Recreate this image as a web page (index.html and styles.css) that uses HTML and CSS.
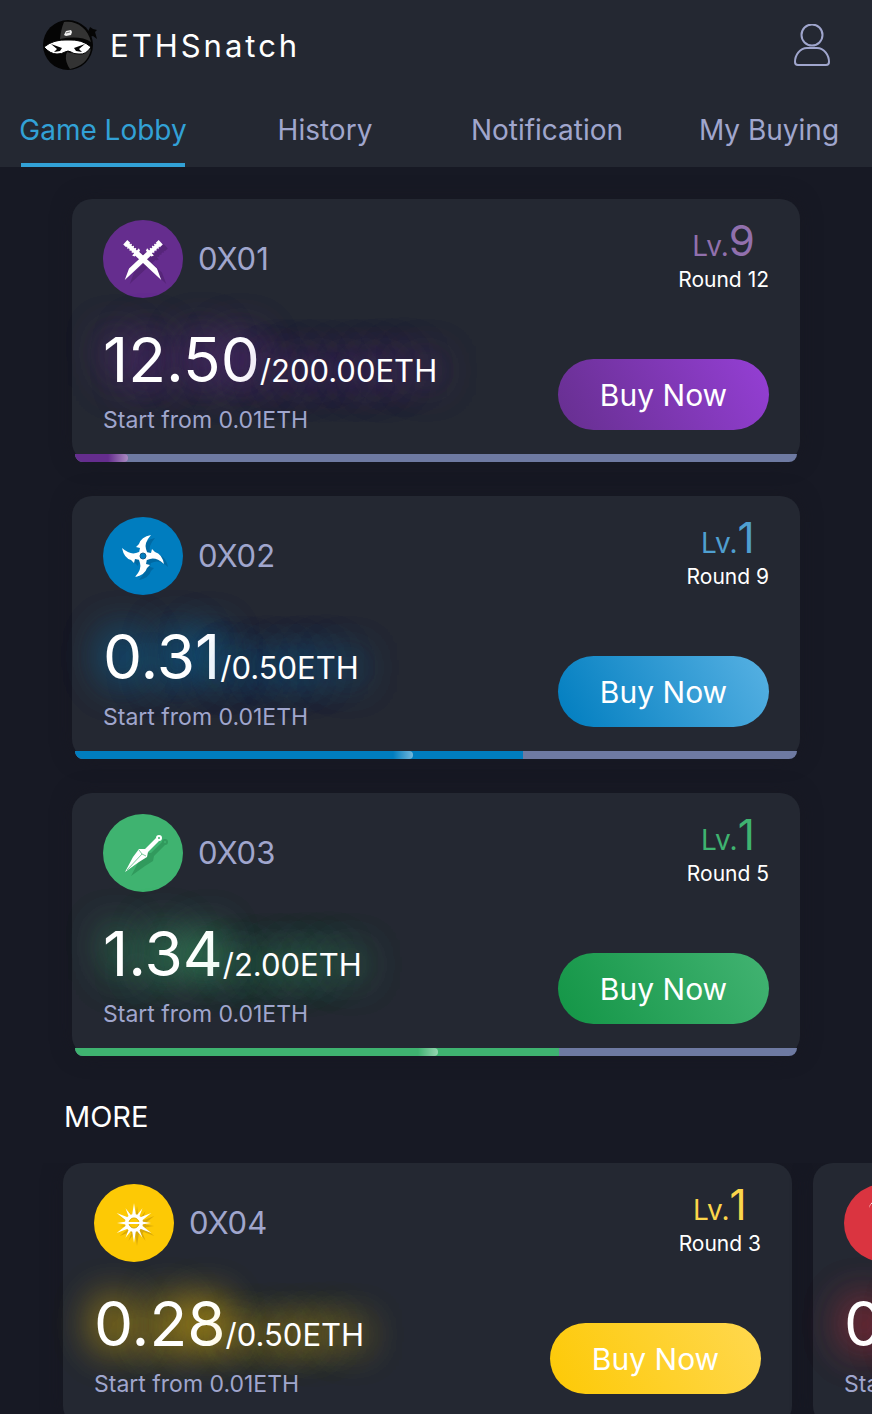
FILE: index.html
```html
<!DOCTYPE html>
<html lang="en">
  <head>
    <meta charset="UTF-8" />
    <meta name="viewport" content="width=device-width, initial-scale=1.0" />
    <title>ETHSnatch</title>
    <link rel="stylesheet" href="styles.css">
  </head>
  <body>
    <div class="page">
      <header class="header">
        <div class="topbar">
          <a class="brand" href="#">
            <svg class="logo" viewBox="0 0 56 50" aria-hidden="true">
              <path d="M46 12 48 7l3 2 4 1-2 2 2 7-4-3-4 1z" fill="#050505" />
              <circle cx="26" cy="25" r="25" fill="#050505" />
              <path d="M22 2C34 0 46 8 49 22Q38 15 18 19Q19 9 22 2z" fill="#333" />
              <path d="M25 32Q36 36 49 29C47 40 39 47 28 49Q23 42 24 35z" fill="#333" />
              <path d="M2 27Q12 19 26 20Q40 19 49 27Q44 35 37 34Q31 34 29 32Q26 30 23 32Q20 34 15 34Q8 34 2 27z" fill="#fff" stroke="#050505" />
              <path d="M9 24 20 28 18 31 12 32 15 29z" fill="#050505" />
              <path d="M43 24 32 28 34 31 40 32 37 29z" fill="#050505" />
              <path d="m24 11 5-1 1 2-1 3-5 1-2-1z" fill="#eee" />
              <path d="m24 13 4-1" stroke="#777" />
            </svg>
            <span>ETHSnatch</span>
          </a>
          <button class="user-btn" type="button" aria-label="Account">
            <svg viewBox="0 0 36 42" fill="none" stroke="#a0a6cd" stroke-width="2" aria-hidden="true">
              <circle cx="18" cy="11" r="10.5" />
              <path d="M13 24h10C30 24 35 31 35 38Q35 41 32 41H4Q1 41 1 38C1 31 6 24 13 24z" />
            </svg>
          </button>
        </div>
        <nav class="tabs">
          <a class="tab active" href="#">Game Lobby</a>
          <a class="tab" href="#">History</a>
          <a class="tab" href="#">Notification</a>
          <a class="tab" href="#">My Buying</a>
        </nav>
      </header>

      <main>
        <section class="games">
          <article class="card purple">
            <div class="card-top">
              <svg class="icon" viewBox="0 0 80 78" aria-hidden="true">
                <defs>
                  <g id="sword">
                    <path d="M-1-3h4v6h-4zM4-3h1.500v6H4zM7-3h1.500v6H7zM10-3h1.500v6H10z" />
                    <path d="M1-2h14v4H1zM13-5l2.500 1v1.500H40L51 3H15.500V4L13 5z" />
                  </g>
                  <g id="swords">
                    <use href="#sword" transform="translate(23 23) rotate(43)" />
                    <use href="#sword" transform="translate(57 23) scale(-1 1) rotate(43)" />
                  </g>
                </defs>
                <ellipse cx="40" cy="39" rx="40" ry="39" fill="#652d8e" />
                <use href="#swords" transform="translate(5 4)" fill="#562579" />
                <use href="#swords" fill="#fff" />
              </svg>
              <h2 class="name">0X01</h2>
              <div class="level">
                <p class="lv">Lv.<b>9</b></p>
                <p class="round">Round 12</p>
              </div>
            </div>
            <div class="card-bottom">
              <div>
                <p class="amount"><b>12.50</b>/200.00ETH</p>
                <p class="start">Start from 0.01ETH</p>
              </div>
              <button class="buy" type="button">Buy Now</button>
            </div>
            <div class="bar">
              <div class="fill" style="width: 7.3%"><div class="shine" style="width: 100%"></div></div>
            </div>
          </article>

          <article class="card blue">
            <div class="card-top">
              <svg class="icon" viewBox="0 0 80 78" aria-hidden="true">
                <defs>
                  <path id="blade" d="M8-21Q-2-19-4-12L-7-9-3-8-4-3-3 3H3L4-4 3-7Q1-13 8-21z" />
                  <g id="shuriken">
                    <use href="#blade" />
                    <use href="#blade" transform="rotate(90)" />
                    <use href="#blade" transform="rotate(180)" />
                    <use href="#blade" transform="rotate(270)" />
                  </g>
                </defs>
                <ellipse cx="40" cy="39" rx="40" ry="39" fill="#007dbf" />
                <use href="#shuriken" transform="translate(44 42)" fill="#0069a3" />
                <use href="#shuriken" transform="translate(40 39)" fill="#fff" />
                <circle cx="40" cy="39" r="3" fill="#007dbf" stroke="#155f8c" />
              </svg>
              <h2 class="name">0X02</h2>
              <div class="level">
                <p class="lv">Lv.<b>1</b></p>
                <p class="round">Round 9</p>
              </div>
            </div>
            <div class="card-bottom">
              <div>
                <p class="amount"><b>0.31</b>/0.50ETH</p>
                <p class="start">Start from 0.01ETH</p>
              </div>
              <button class="buy" type="button">Buy Now</button>
            </div>
            <div class="bar">
              <div class="fill" style="width: 62%"><div class="shine" style="width: 75.4%"></div></div>
            </div>
          </article>

          <article class="card green">
            <div class="card-top">
              <svg class="icon" viewBox="0 0 80 78" aria-hidden="true">
                <defs>
                  <g id="kunai">
                    <path d="M53 24 56 27 45 38 44 43 36 48 22 58 30 43 36 35 42 35z" stroke="none" />
                    <circle class="ring" cx="56" cy="24" r="2" />
                  </g>
                </defs>
                <ellipse cx="40" cy="39" rx="40" ry="39" fill="#3fb370" />
                <use href="#kunai" transform="translate(6 4)" fill="#319a5d" stroke="#319a5d" />
                <use href="#kunai" fill="#fff" stroke="#fff" />
                <path d="M36 36 39 40 24 56M39 40 43 42" fill="none" stroke="#3fb370" stroke-width="0.7" />
              </svg>
              <h2 class="name">0X03</h2>
              <div class="level">
                <p class="lv">Lv.<b>1</b></p>
                <p class="round">Round 5</p>
              </div>
            </div>
            <div class="card-bottom">
              <div>
                <p class="amount"><b>1.34</b>/2.00ETH</p>
                <p class="start">Start from 0.01ETH</p>
              </div>
              <button class="buy" type="button">Buy Now</button>
            </div>
            <div class="bar">
              <div class="fill" style="width: 67%"><div class="shine" style="width: 75%"></div></div>
            </div>
          </article>
        </section>

        <section>
          <h2 class="more-title">MORE</h2>
          <div class="more-row">
            <article class="card yellow">
              <div class="card-top">
                <svg class="icon" viewBox="0 0 80 78" aria-hidden="true">
                  <defs>
                    <path id="ray" d="M-2-7 0-20 2-7z" />
                    <g id="sun">
                      <use href="#ray" />
                      <use href="#ray" transform="rotate(30) scale(0.85)" />
                      <use href="#ray" transform="rotate(60)" />
                      <use href="#ray" transform="rotate(90) scale(0.85)" />
                      <use href="#ray" transform="rotate(120)" />
                      <use href="#ray" transform="rotate(150) scale(0.85)" />
                      <use href="#ray" transform="rotate(180)" />
                      <use href="#ray" transform="rotate(210) scale(0.85)" />
                      <use href="#ray" transform="rotate(240)" />
                      <use href="#ray" transform="rotate(270) scale(0.85)" />
                      <use href="#ray" transform="rotate(300)" />
                      <use href="#ray" transform="rotate(330) scale(0.85)" />
                      <circle r="9" />
                    </g>
                  </defs>
                  <ellipse cx="40" cy="39" rx="40" ry="39" fill="#fdc905" />
                  <use href="#sun" transform="translate(43 42)" fill="#d9a908" />
                  <use href="#sun" transform="translate(40 39)" fill="#fff" />
                  <circle cx="40" cy="39" r="5" fill="#fdc905" stroke="#d9a908" />
                  <path d="M34 39h12" stroke="#fff" stroke-width="2" />
                </svg>
                <h2 class="name">0X04</h2>
                <div class="level">
                  <p class="lv">Lv.<b>1</b></p>
                  <p class="round">Round 3</p>
                </div>
              </div>
              <div class="card-bottom">
                <div>
                  <p class="amount"><b>0.28</b>/0.50ETH</p>
                  <p class="start">Start from 0.01ETH</p>
                </div>
                <button class="buy" type="button">Buy Now</button>
              </div>
              <div class="bar">
                <div class="fill" style="width: 56%"><div class="shine" style="width: 75%"></div></div>
              </div>
            </article>

            <article class="card red">
              <div class="card-top">
                <svg class="icon" viewBox="0 0 80 78" aria-hidden="true">
                  <ellipse cx="40" cy="39" rx="40" ry="39" fill="#da3440" />
                  <path d="M25 24Q25 20 30 17Q46 16 54 30L57 55Q50 34 42 27Q34 20 27 20z" fill="#fff" />
                </svg>
                <h2 class="name">0X05</h2>
                <div class="level">
                  <p class="lv">Lv.<b>1</b></p>
                  <p class="round">Round 2</p>
                </div>
              </div>
              <div class="card-bottom">
                <div>
                  <p class="amount"><b>0.20</b>/0.50ETH</p>
                  <p class="start">Start from 0.01ETH</p>
                </div>
                <button class="buy" type="button">Buy Now</button>
              </div>
              <div class="bar">
                <div class="fill" style="width: 40%"><div class="shine" style="width: 75%"></div></div>
              </div>
            </article>
          </div>
        </section>
      </main>
    </div>
  </body>
</html>
```
FILE: styles.css
```css
* {
  box-sizing: border-box;
}
body {
  margin: 0;
  background-color: #171924;
  color: #fff;
  font-family: Inter, "Liberation Sans", sans-serif;
  font-weight: 400;
}
h2,
p {
  margin: 0;
  font-weight: 400;
}
b {
  font-weight: 400;
}
a {
  color: inherit;
  text-decoration: none;
}
button {
  border: none;
  padding: 0;
  font-family: inherit;
  color: #fff;
  cursor: pointer;
}
.page {
  height: 100vh;
  overflow-x: hidden;
  overflow-y: auto;
  scrollbar-width: none;
}

/* header */
.header {
  background-color: #242832;
}
.topbar {
  display: flex;
  justify-content: space-between;
  align-items: center;
  padding: 20px 42px 22px;
}
.brand {
  display: flex;
  align-items: center;
  gap: 12px;
  font-size: 31px;
  letter-spacing: 3px;
}
.logo {
  width: 56px;
  height: 50px;
}
.user-btn {
  background: none;
  height: 42px;
}
.user-btn svg {
  display: block;
  width: 36px;
  height: 42px;
}
.tabs {
  display: grid;
  grid-template-columns: repeat(4, 1fr);
  margin: 0 -8px;
}
.tab {
  display: flex;
  flex-direction: column;
  align-items: center;
  gap: 15px;
  padding-top: 20px;
  font-size: 28px;
  line-height: 36px;
  color: #a0a6cd;
}
.tab::after {
  content: "";
  width: 164px;
  height: 4px;
}
.tab.active {
  color: #32a1d6;
}
.tab.active::after {
  background-color: #32a1d6;
}

/* cards */
.games {
  display: flex;
  flex-direction: column;
  gap: 34px;
  padding: 32px 72px 0;
}
.card {
  padding-top: 21px;
  background-color: #242832;
  border-radius: 20px;
  box-shadow: 0 0 20px rgba(23, 23, 32, 0.5);
}
.card-top {
  display: flex;
  padding: 0 31px;
}
.icon {
  width: 80px;
  height: 78px;
}
.ring {
  fill: none;
  stroke-width: 2px;
}
.name {
  flex: 1;
  margin-left: 15px;
  font-size: 31px;
  line-height: 78px;
  color: #a0a6cd;
}
.level {
  text-align: center;
}
.lv {
  font-size: 28px;
  line-height: 28px;
  color: var(--level);
}
.lv b {
  font-size: 42px;
  line-height: 42px;
}
.round {
  margin-top: 5px;
  font-size: 21px;
  line-height: 26px;
}
.card-bottom {
  display: flex;
  justify-content: space-between;
  align-items: flex-end;
  padding: 30px 31px 20px;
}
.amount {
  font-size: 31px;
  line-height: 30px;
  text-shadow: 0 0 40px var(--main), 0 0 40px var(--main);
}
.amount b {
  font-size: 62px;
  line-height: 64px;
}
.start {
  margin-top: 14px;
  font-size: 23px;
  line-height: 28px;
  color: #a0a6cd;
}
.buy {
  width: 211px;
  height: 71px;
  margin-bottom: 4px;
  border-radius: 36px;
  font-size: 30px;
  background: linear-gradient(60deg, var(--from), var(--to));
}
.bar {
  height: 8px;
  margin: 0 3px;
  overflow: hidden;
  border-radius: 0 0 8px 8px;
  background-color: #6e7aa2;
}
.fill {
  height: 8px;
  background-color: var(--main);
}
.shine {
  height: 8px;
  border-radius: 0 4px 4px 0;
  background: linear-gradient(to right, transparent, rgba(255, 255, 255, 0.45)) no-repeat right / 20px 8px;
}
.purple {
  --main: #652d8e;
  --level: #9170ad;
  --from: #662f8f;
  --to: #953fd5;
}
.purple .fill {
  border-radius: 0 4px 4px 0;
}
.blue {
  --main: #007dbf;
  --level: #4f9fd0;
  --from: #007dbf;
  --to: #57b1e3;
}
.green {
  --main: #3fb370;
  --level: #3fb370;
  --from: #139546;
  --to: #42b372;
}
.yellow {
  --main: #fdc905;
  --level: #fbd64b;
  --from: #fdc905;
  --to: #ffd84f;
}
.red {
  --main: #da3440;
  --level: #e65f68;
  --from: #da3440;
  --to: #ef6670;
}

/* more */
.more-title {
  padding: 43px 64px 28px;
  font-size: 29px;
  line-height: 36px;
}
.more-row {
  display: flex;
  gap: 21px;
  padding: 0 63px 40px;
  overflow-x: auto;
  scrollbar-width: none;
}
.more-row .card {
  flex: 0 0 calc(100vw - 143px);
}
```
